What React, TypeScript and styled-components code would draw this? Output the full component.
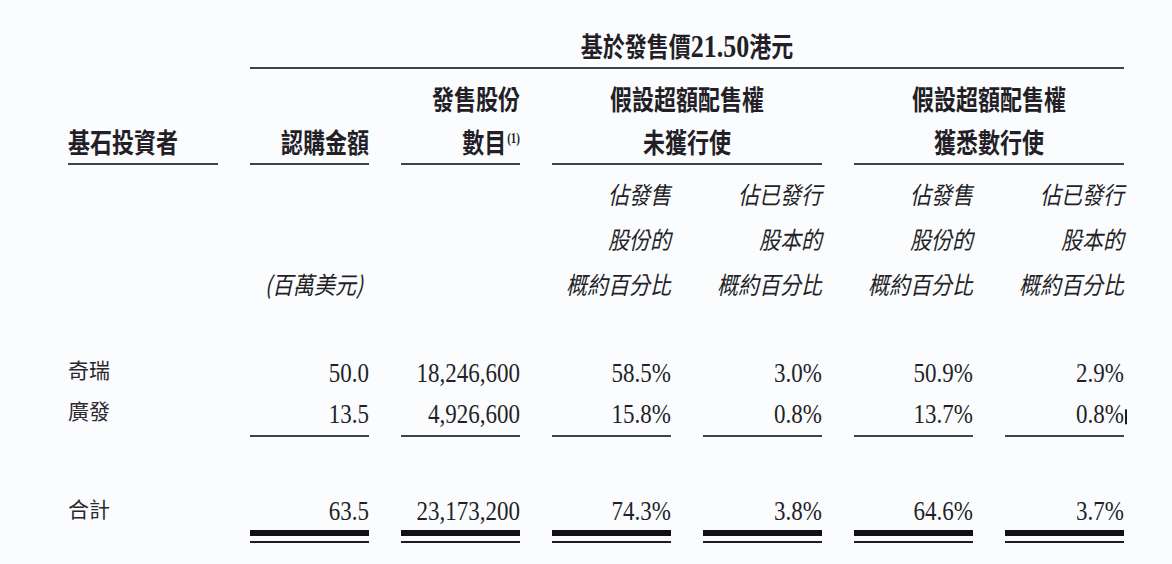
import React from "react";
import styled, { createGlobalStyle } from "styled-components";

const GlobalStyle = createGlobalStyle`
  html, body {
    margin: 0;
    padding: 0;
    background: #fafcfe;
  }
  body {
    width: 1172px;
    height: 564px;
    overflow: hidden;
  }
`;

const INK = "#241f27";
const RULE = "#434249";
const COLS = "150px repeat(6, 119px)";

const Sheet = styled.div`
  width: 1172px;
  height: 564px;
  box-sizing: border-box;
  padding-left: 68px;
  background: #fafcfe;
  color: ${INK};
  font-family: "Noto Sans CJK TC", "Noto Sans CJK SC", sans-serif;
`;

const Row = styled.div<{ $pt?: number; $align?: "start" | "end" }>`
  display: grid;
  grid-template-columns: ${COLS};
  column-gap: 32px;
  align-items: ${(p) => p.$align ?? "end"};
  padding-top: ${(p) => p.$pt ?? 0}px;
`;

const TitleCell = styled.div`
  grid-column: 2 / -1;
  text-align: center;
  font-size: 22px;
  font-weight: 700;
  line-height: 26px;
  padding: 32px 0 7px;
  border-bottom: 2px solid ${RULE};
`;

const TallLine = styled.span<{ $scale?: number }>`
  display: block;
  transform: scaleY(${(p) => p.$scale ?? 1.25});
`;

const TitleNum = styled.span`
  font-family: "Liberation Serif", serif;
  font-size: 26px;
  font-weight: 700;
`;

const HeadCell = styled.div<{ $span?: string; $align?: "left" | "right" | "center" }>`
  grid-column: ${(p) => p.$span ?? "auto"};
  text-align: ${(p) => p.$align ?? "right"};
  font-size: 22px;
  font-weight: 700;
  line-height: 43px;
  border-bottom: 2px solid ${RULE};
  white-space: nowrap;
`;

const Sup = styled.sup`
  font-family: "Liberation Serif", serif;
  font-size: 11px;
  font-weight: 700;
  line-height: 1;
  vertical-align: 8px;
  margin-left: 1px;
`;

const NoteCell = styled.div<{ $col?: number; $pr?: number }>`
  grid-column: ${(p) => (p.$col ? `${p.$col}` : "auto")};
  text-align: right;
  font-size: 21px;
  font-style: italic;
  font-weight: 400;
  line-height: 45px;
  padding-right: ${(p) => p.$pr ?? 0}px;
  white-space: nowrap;
`;

const Label = styled.div<{ $lh?: number; $pb?: number }>`
  text-align: left;
  font-size: 21px;
  line-height: ${(p) => p.$lh ?? 33}px;
  padding-bottom: ${(p) => p.$pb ?? 8}px;
  color: #2c2830;
`;

const Value = styled.div<{ $rule?: boolean; $lh?: number }>`
  text-align: right;
  font-family: "Liberation Serif", serif;
  font-size: 23px;
  line-height: ${(p) => p.$lh ?? 41}px;
  border-bottom: ${(p) => (p.$rule ? `2px solid ${RULE}` : "none")};
  white-space: nowrap;
`;

const NumText = styled.span`
  display: block;
  transform: scaleY(1.15);
`;

const Caret = styled.span`
  display: inline-block;
  width: 2px;
  height: 13px;
  background: #1e1b22;
  vertical-align: -1px;
  margin-left: 1px;
  margin-right: -3px;
`;

const TotalCell = styled.div`
  display: flex;
  flex-direction: column;
`;

const DoubleRule = styled.div`
  height: 5px;
  border-top: 6px solid #111014;
  border-bottom: 2px solid #1e1d22;
`;

const notes = [
  ["佔發售", "股份的", "概約百分比"],
  ["佔已發行", "股本的", "概約百分比"],
  ["佔發售", "股份的", "概約百分比"],
  ["佔已發行", "股本的", "概約百分比"],
];

const rows = [
  { name: "奇瑞", vals: ["50.0", "18,246,600", "58.5%", "3.0%", "50.9%", "2.9%"] },
  { name: "廣發", vals: ["13.5", "4,926,600", "15.8%", "0.8%", "13.7%", "0.8%"] },
];

const totals = ["63.5", "23,173,200", "74.3%", "3.8%", "64.6%", "3.7%"];

export default function App() {
  return (
    <>
      <GlobalStyle />
      <Sheet>
        <Row>
          <TitleCell>
            <TallLine $scale={1.22}>
              基於發售價<TitleNum>21.50</TitleNum>港元
            </TallLine>
          </TitleCell>
        </Row>

        <Row $pt={8}>
          <HeadCell $align="left">
            <TallLine>基石投資者</TallLine>
          </HeadCell>
          <HeadCell>
            <TallLine>認購金額</TallLine>
          </HeadCell>
          <HeadCell>
            <TallLine>發售股份</TallLine>
            <TallLine>
              數目<Sup>(1)</Sup>
            </TallLine>
          </HeadCell>
          <HeadCell $span="span 2" $align="center">
            <TallLine>假設超額配售權</TallLine>
            <TallLine>未獲行使</TallLine>
          </HeadCell>
          <HeadCell $span="span 2" $align="center">
            <TallLine>假設超額配售權</TallLine>
            <TallLine>獲悉數行使</TallLine>
          </HeadCell>
        </Row>

        <Row $pt={7}>
          <NoteCell $col={2} $pr={6}>
            <TallLine $scale={1.15}>(百萬美元)</TallLine>
          </NoteCell>
          {notes.map((lines, i) => (
            <NoteCell key={i} $col={4 + i}>
              {lines.map((l, j) => (
                <TallLine key={j} $scale={1.15}>
                  {l}
                </TallLine>
              ))}
            </NoteCell>
          ))}
        </Row>

        <Row $pt={46}>
          {rows.map((r, ri) => (
            <React.Fragment key={r.name}>
              <Label $pb={ri === rows.length - 1 ? 10 : 8}>{r.name}</Label>
              {r.vals.map((v, vi) => (
                <Value key={vi} $rule={ri === rows.length - 1}>
                  <NumText>
                    {v}
                    {ri === 1 && vi === r.vals.length - 1 ? <Caret /> : null}
                  </NumText>
                </Value>
              ))}
            </React.Fragment>
          ))}
        </Row>

        <Row $pt={56} $align="start">
          <Label $lh={31} $pb={6}>合計</Label>
          {totals.map((v, i) => (
            <TotalCell key={i}>
              <Value $lh={37}>
                <NumText>{v}</NumText>
              </Value>
              <DoubleRule />
            </TotalCell>
          ))}
        </Row>
      </Sheet>
    </>
  );
}
